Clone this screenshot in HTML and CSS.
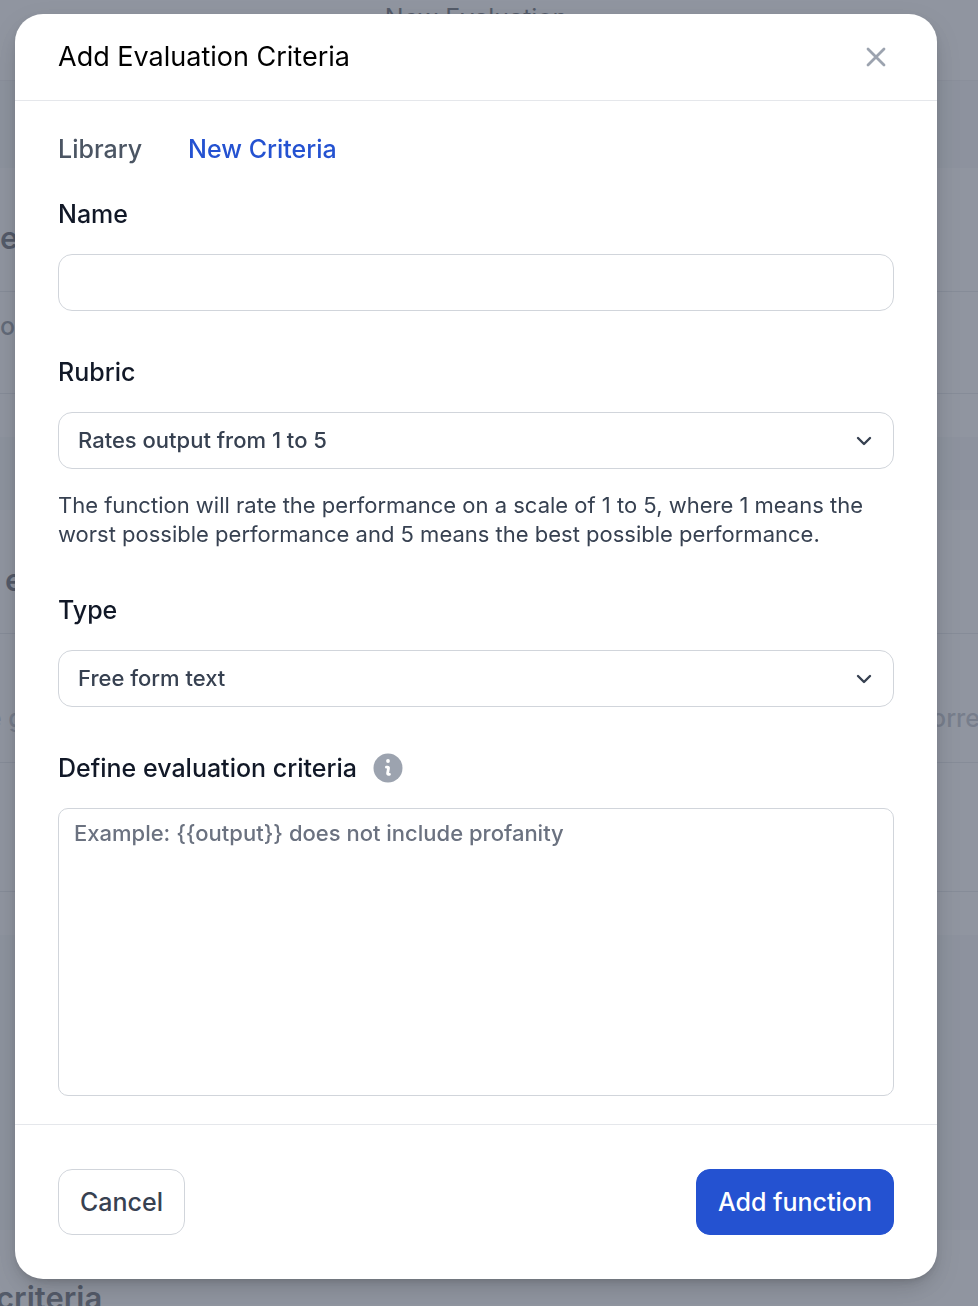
FILE: index.html
```html
<!doctype html>
<html lang="en">
<head>
	<title>New Evaluation</title>
	<meta charset="utf-8">
	<meta name="viewport" content="width=device-width, initial-scale=1">
	<link rel="stylesheet" href="styles.css">
</head>

<body>

	<!-- Page behind the dialog -->
	<div class="page" aria-hidden="true">
		<div class="topbar">New Evaluation</div>
		<div class="band"></div>
		<div class="panel">
			<div class="panel-title">e</div>
			<div class="panel-row">o</div>
			<div class="panel-end"></div>
		</div>
		<div class="band short"></div>
		<div class="panel">
			<div class="panel-title indent">e</div>
			<div class="panel-row tall faint"><span>e g</span><span>orre</span></div>
			<div class="panel-row tall"></div>
			<div class="panel-end"></div>
		</div>
		<div class="band long"></div>
		<div class="panel">
			<div class="panel-title last">criteria</div>
		</div>
	</div>

	<div class="overlay">
		<form class="modal" role="dialog" aria-labelledby="title" onsubmit="return false;">

			<div class="modal-header">
				<h1 id="title">Add Evaluation Criteria</h1>
				<button type="button" class="close" aria-label="Close">
					<svg width="20" height="20" viewBox="0 0 20 20" fill="none" stroke="currentColor" stroke-width="2.8" stroke-linecap="round">
						<path d="M2 2l16 16M18 2L2 18" />
					</svg>
				</button>
			</div>

			<div class="modal-body">
				<div class="tabs">
					<button type="button" class="tab">Library</button>
					<button type="button" class="tab active">New Criteria</button>
				</div>

				<div class="field">
					<label for="name">Name</label>
					<input type="text" id="name" />
				</div>

				<div class="field">
					<label for="rubric">Rubric</label>
					<div class="select">
						<select id="rubric">
							<option>Rates output from 1 to 5</option>
						</select>
						<svg width="16" height="10" viewBox="0 0 16 10" fill="none" stroke="currentColor" stroke-width="2.4" stroke-linecap="round" stroke-linejoin="round">
							<path d="M2 2l6 6 6-6" />
						</svg>
					</div>
					<p class="help">The function will rate the performance on a scale of 1 to 5, where 1 means the worst possible performance and 5 means the best possible performance.</p>
				</div>

				<div class="field">
					<label for="type">Type</label>
					<div class="select">
						<select id="type">
							<option>Free form text</option>
						</select>
						<svg width="16" height="10" viewBox="0 0 16 10" fill="none" stroke="currentColor" stroke-width="2.4" stroke-linecap="round" stroke-linejoin="round">
							<path d="M2 2l6 6 6-6" />
						</svg>
					</div>
				</div>

				<div class="field">
					<div class="label-row">
						<label for="criteria">Define evaluation criteria</label>
						<svg class="info" width="36" height="36" viewBox="0 0 36 36">
							<circle cx="18" cy="18" r="14.5" fill="currentColor" />
							<circle cx="18" cy="11" r="1.9" fill="#fff" />
							<path d="M16.400 17.200h1.200c.7 0 1 .4.9 1l-.9 5c-.1.7.3 1.100.9 1.100h1" fill="none" stroke="#fff" stroke-width="2.8" stroke-linecap="round" stroke-linejoin="round" />
						</svg>
					</div>
					<textarea id="criteria" placeholder="Example: {{output}} does not include profanity"></textarea>
				</div>
			</div>

			<div class="modal-footer">
				<button type="button" class="button">Cancel</button>
				<button type="submit" class="button primary">Add function</button>
			</div>

		</form>
	</div>

</body>

</html>
```
FILE: styles.css
```css
* {
	box-sizing: border-box;
}
body {
	margin: 0;
	height: 100vh;
	overflow: hidden;
	color: #111827;
	background: #fff;
	font: 22px/29px Inter, "Liberation Sans", sans-serif;
}
h1, p {
	margin: 0;
}
button, input, select, textarea {
	font: inherit;
}
button {
	cursor: pointer;
}

/* Page behind the dialog */
.topbar {
	height: 81px;
	padding-right: 26px;
	border-bottom: 1px solid #e5e7eb;
	font-size: 25px;
	line-height: 36px;
	text-align: center;
}
.band {
	height: 87px;
	background: #f3f4f6;
}
.band.short {
	height: 73px;
}
.band.long {
	height: 295px;
}
.panel-title {
	height: 124px;
	padding-top: 52px;
	border-bottom: 1px solid #d6d9df;
	font-size: 31px;
	font-weight: 600;
	line-height: 36px;
}
.panel-title.indent {
	padding-left: 5px;
}
.panel-title.last {
	margin-left: -4px;
	padding-top: 50px;
	border: 0;
}
.panel-row {
	display: flex;
	justify-content: space-between;
	height: 102px;
	padding-top: 18px;
	border-bottom: 1px solid #d6d9df;
	color: #4b5563;
	font-size: 25px;
	font-weight: 500;
	line-height: 32px;
}
.panel-row.tall {
	height: 129px;
	padding-top: 68px;
}
.panel-row.faint {
	color: #9ca3af;
}
.panel-row.faint span {
	margin: 0 -2px 0 -13px;
}
.panel-end {
	height: 43px;
}

/* Dialog */
.overlay {
	position: fixed;
	inset: 0;
	padding: 14px 41px 27px 15px;
	overflow: auto;
	background: rgba(107,114,128,0.75);
}
.modal {
	border-radius: 28px;
	background: #fff;
	box-shadow: 0 10px 28px -4px rgba(0,0,0,0.2), 0 4px 10px -4px rgba(0,0,0,0.2);
}
.modal-header {
	display: flex;
	align-items: center;
	justify-content: space-between;
	height: 87px;
	padding: 0 43px;
	border-bottom: 1px solid #e5e7eb;
}
.modal-header h1 {
	color: #000;
	font-size: 27px;
	font-weight: 400;
	line-height: 36px;
}
.close {
	display: flex;
	padding: 8px;
	border: 0;
	color: #9ca3af;
	background: none;
}
.modal-body {
	padding: 30px 43px 28px;
}
.tabs {
	display: flex;
	gap: 46px;
	margin-bottom: 29px;
}
.tab {
	padding: 0;
	border: 0;
	color: #4b5563;
	background: none;
	font-size: 25px;
	font-weight: 500;
	line-height: 36px;
}
.tab.active {
	color: #2452d1;
}
.field + .field {
	margin-top: 43px;
}
label {
	display: block;
	font-size: 25px;
	font-weight: 500;
	line-height: 36px;
}
.field > label,
.label-row {
	margin-bottom: 22px;
}
.label-row {
	display: flex;
	gap: 13px;
}
.info {
	color: #9ca3af;
}
input, select, textarea {
	display: block;
	width: 100%;
	height: 57px;
	padding: 0 19px;
	border: 1px solid #d1d5db;
	border-radius: 14px;
	outline: none;
	color: #374151;
	background: #fff;
	font-weight: 500;
}
input:focus, select:focus, textarea:focus {
	border-color: #2452d1;
}
.select {
	display: grid;
	align-items: center;
}
.select select,
.select svg {
	grid-area: 1 / 1;
}
.select select {
	appearance: none;
}
.select svg {
	justify-self: end;
	margin-right: 22px;
	color: #374151;
	pointer-events: none;
}
.help {
	margin-top: 22px;
	color: #374151;
}
textarea {
	height: 288px;
	padding: 10px 15px;
	border-radius: 10px;
	resize: none;
}
textarea::placeholder {
	color: #6b7280;
}
.modal-footer {
	display: flex;
	justify-content: space-between;
	padding: 44px 43px;
	border-top: 1px solid #e5e7eb;
}
.button {
	height: 66px;
	padding: 0 21px;
	border: 1px solid #d1d5db;
	border-radius: 14px;
	color: #374151;
	background: #fff;
	font-size: 25px;
	font-weight: 500;
}
.button.primary {
	border-color: #2452d1;
	color: #fff;
	background: #2452d1;
}
```
